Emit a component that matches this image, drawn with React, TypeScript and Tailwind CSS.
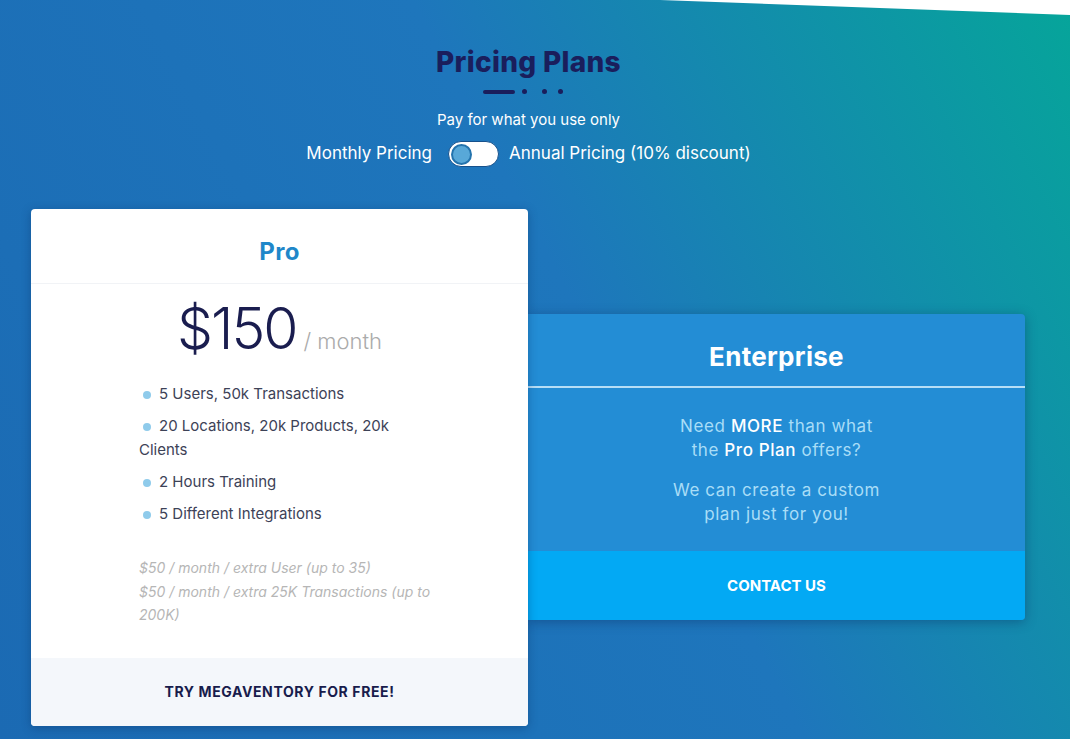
import React from 'react';

const features = [
  { text: '5 Users, 50k Transactions' },
  { text: '20 Locations, 20k Products, 20k', rest: 'Clients' },
  { text: '2 Hours Training' },
  { text: '5 Different Integrations' },
];

const Toggle = () => (
  <div className="flex h-[26px] w-[51px] items-center rounded-full border border-[#16518c] bg-white px-[2px]">
    <div className="h-[21px] w-[21px] rounded-full border-2 border-[#2373ad] bg-[#58a8d8]" />
  </div>
);

const ProCard = () => (
  <div className="relative z-10 w-[497px] rounded-[4px] bg-white shadow-[0_2px_10px_rgba(10,40,90,0.35)]">
    <div className="border-b border-[#f1f3f6] pt-[29px] pb-[17px] text-center text-[24px] leading-[28px] font-bold tracking-[0.3px] text-[#1f87c9]">
      Pro
    </div>
    <div className="mt-[14px] flex items-baseline justify-center text-[#1a1d4f]">
      <span className="text-[57px] leading-[62px] font-light tracking-[-2px]">$150</span>
      <span className="ml-[7px] text-[22px] font-light text-[#ababab]">/ month</span>
    </div>
    <ul className="mt-[22px] flex flex-col gap-[8px] px-[108px] text-[15px] leading-[24px] text-[#3d4257]">
      {features.map((f, i) => (
        <li key={i}>
          <span className="mr-[8px] ml-[4px] inline-block h-[8px] w-[8px] rounded-full bg-[#8fcbeb] align-middle" />
          {f.text}
          {f.rest && (
            <>
              <br />
              {f.rest}
            </>
          )}
        </li>
      ))}
    </ul>
    <div className="mt-[30px] mb-[31px] pl-[108px] text-[14px] leading-[23.5px] italic text-[#b6b6b6]">
      $50 / month / extra User (up to 35)
      <br />
      $50 / month / extra 25K Transactions (up to
      <br />
      200K)
    </div>
    <div className="flex h-[68px] items-center justify-center rounded-b-[4px] bg-[#f4f7fb] text-[14px] font-bold tracking-[0.6px] text-[#181c4c]">
      TRY MEGAVENTORY FOR FREE!
    </div>
  </div>
);

const EnterpriseCard = () => (
  <div className="w-[497px] overflow-hidden rounded-r-[4px] bg-[#238dd5] shadow-[0_2px_12px_rgba(10,40,90,0.4)]">
    <div className="border-b-2 border-[#b6def6] pt-[28px] pb-[14px] text-center text-[26px] leading-[30px] font-bold tracking-[0.3px] text-white">
      Enterprise
    </div>
    <div className="flex flex-col gap-[16px] pt-[26px] pb-[25px] text-center text-[17px] leading-[24px] tracking-[0.6px] text-[#a9ddf7]">
      <p>
        Need <span className="font-medium text-white">MORE</span> than what
        <br />
        the <span className="font-medium text-white">Pro Plan</span> offers?
      </p>
      <p>
        We can create a custom
        <br />
        plan just for you!
      </p>
    </div>
    <div className="flex h-[69px] items-center justify-center bg-[#03a9f4] text-[15px] font-bold text-white">
      CONTACT US
    </div>
  </div>
);

export default function App() {
  return (
    <div className="relative min-h-[739px] w-full overflow-hidden bg-[linear-gradient(62deg,#1b6ab3_0%,#1e76bc_55%,#06a59a_100%)] font-['Inter',sans-serif]">
      <svg className="absolute top-0 right-0" width="410" height="15" viewBox="0 0 410 15">
        <polygon points="0,0 410,0 410,15" fill="#ffffff" />
      </svg>

      <div className="ml-[31px] w-[995px] pt-[45px] pb-[14px]">
        <h1 className="text-center text-[28px] leading-[34px] font-extrabold tracking-[0.3px] text-[#1a1e5c]">
          Pricing Plans
        </h1>
        <div className="mt-[10px] mr-[12px] flex items-center justify-center">
          <span className="h-[4px] w-[32px] rounded-full bg-[#1a1e5c]" />
          <span className="ml-[7px] h-[5px] w-[5px] rounded-full bg-[#1a1e5c]" />
          <span className="ml-[15px] h-[5px] w-[5px] rounded-full bg-[#1a1e5c]" />
          <span className="ml-[11px] h-[5px] w-[5px] rounded-full bg-[#1a1e5c]" />
        </div>
        <p className="mt-[15px] text-center text-[15px] leading-[22px] text-white">Pay for what you use only</p>
        <div className="mt-[10px] flex items-center justify-center gap-[16px] text-[17px] text-white">
          <span>Monthly Pricing</span>
          <Toggle />
          <span className="-ml-[6px]">Annual Pricing (10% discount)</span>
        </div>

        <div className="mt-[42px] flex items-center">
          <ProCard />
          <EnterpriseCard />
        </div>
      </div>
    </div>
  );
}
